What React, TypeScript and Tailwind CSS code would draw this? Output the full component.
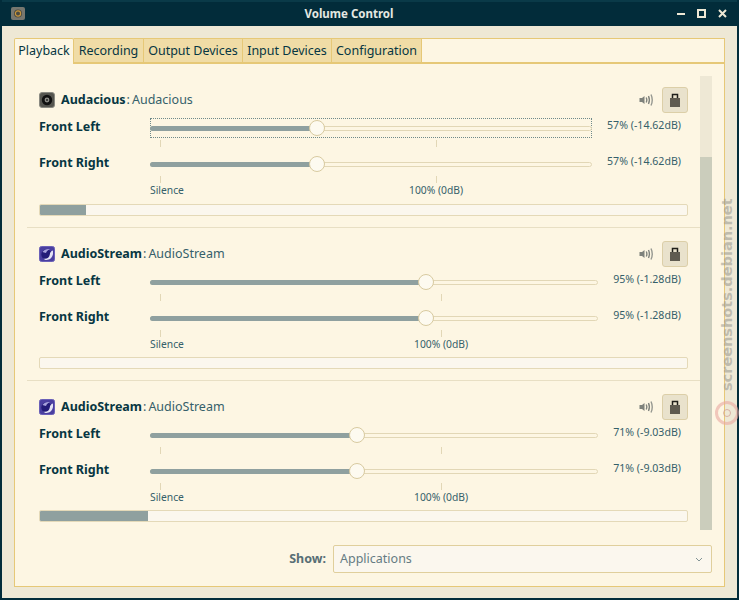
import React from 'react';

type Stream = {
    name: string;
    kind: 'audacious' | 'audiostream';
    value: string;
    thumb: number;
    zeroTick: number;
    meter: number;
};

const streams: Stream[] = [
    { name: 'Audacious', kind: 'audacious', value: '57% (-14.62dB)', thumb: 167, zeroTick: 286, meter: 46 },
    { name: 'AudioStream', kind: 'audiostream', value: '95% (-1.28dB)', thumb: 276, zeroTick: 291, meter: 0 },
    { name: 'AudioStream', kind: 'audiostream', value: '71% (-9.03dB)', thumb: 207, zeroTick: 291, meter: 108 },
];

const tabs = [
    { label: 'Playback', width: 'w-[60px]' },
    { label: 'Recording', width: 'w-[70px]' },
    { label: 'Output Devices', width: 'w-[99px]' },
    { label: 'Input Devices', width: 'w-[89px]' },
    { label: 'Configuration', width: 'w-[90px]' },
];

const AppIcon = () => (
    <svg width="14" height="13" viewBox="0 0 14 13">
        <rect x="0" y="0" width="14" height="13" rx="2" fill="#77776f" />
        <circle cx="7" cy="6.5" r="4" fill="#4a4a42" />
        <circle cx="7" cy="6.5" r="2.6" fill="none" stroke="#c8963c" strokeWidth="1.2" />
    </svg>
);

const AudaciousIcon = () => (
    <svg width="16" height="16" viewBox="0 0 16 16">
        <rect x="0.5" y="0.5" width="15" height="15" rx="2.5" fill="#55554f" stroke="#8a8a82" />
        <circle cx="8" cy="8" r="5.2" fill="#111" />
        <circle cx="8" cy="8" r="2.4" fill="#8c8c86" />
        <circle cx="8" cy="8" r="1" fill="#222" />
    </svg>
);

const AudioStreamIcon = () => (
    <svg width="16" height="16" viewBox="0 0 16 16">
        <rect x="0.5" y="0.5" width="15" height="15" rx="2" fill="#4a3fa0" stroke="#6a60b8" />
        <circle cx="7.5" cy="8.5" r="5.2" fill="#231c78" />
        <path d="M3.5 6 C5 3.5 8 2.5 11 3 C9 4 7.5 5 7 7 C5.5 6.5 4.5 6.2 3.5 6 Z" fill="#a7a2dc" />
        <path d="M4 12.5 C7 13.5 10.5 12 10.8 8.5 C11 6.5 12 5 14 4.5 L14 8 C13.5 11 11 14 7.5 14 C6 14 5 13.4 4 12.5 Z" fill="#e4e3f5" />
    </svg>
);

const SpeakerIcon = () => (
    <svg width="15" height="14" viewBox="0 0 15 14" fill="none">
        <path d="M0.5 5 H3 L5.5 3 V11 L3 9 H0.5 Z" fill="#7f827c" />
        <path d="M7.3 4.5 C8 6 8 8 7.3 9.5" stroke="#7f827c" strokeWidth="1.4" />
        <path d="M9.5 3 C10.6 5.5 10.6 8.5 9.5 11" stroke="#7f827c" strokeWidth="1.4" />
        <path d="M12 1.5 C13.6 5 13.6 9 12 12.5" stroke="#969891" strokeWidth="1.4" />
    </svg>
);

const LockIcon = () => (
    <svg width="12" height="16" viewBox="0 0 12 16" fill="none">
        <path d="M3.5 7 V2.5 H8.5 V7" stroke="#1f1f1a" strokeWidth="1.5" />
        <rect x="1" y="6" width="10" height="9" fill="#5f5b50" />
    </svg>
);

const Slider = ({ stream, focused }: { stream: Stream; focused: boolean }) => (
    <div className="flex-1">
        <div className={`relative h-5 ${focused ? 'outline outline-1 outline-dotted outline-[#6f8a8a] -outline-offset-1' : ''}`}>
            <div className="absolute left-0 right-0 top-[8px] h-[5px] rounded-full border border-[#e2d7b6] bg-[#fdf6e3]" />
            <div className="absolute left-0 top-[8px] h-[5px] rounded-l-full bg-[#8fa09f]" style={{ width: stream.thumb }} />
            <div
                className="absolute top-[2px] h-4 w-4 -ml-2 rounded-full border border-[#d8caa0] bg-[#fdfaf0]"
                style={{ left: stream.thumb }}
            />
        </div>
        <div className="relative mt-[2px] h-[7px]">
            <div className="absolute top-0 h-[7px] w-px bg-[#e2d7b6]" style={{ left: 10 }} />
            <div className="absolute top-0 h-[7px] w-px bg-[#e2d7b6]" style={{ left: stream.zeroTick }} />
        </div>
    </div>
);

const Channel = ({ label, stream, focused }: { label: string; stream: Stream; focused: boolean }) => (
    <div className="flex h-9 items-start">
        <div className="w-[111px] pt-px text-[12.5px] font-bold leading-4 text-[#073642]">{label}</div>
        <div className="flex flex-1 gap-[15px] pr-[7px]">
            <Slider stream={stream} focused={focused} />
            <div className="text-[10.6px] leading-[14px] text-[#35606a]">{stream.value}</div>
        </div>
    </div>
);

const StreamRow = ({ stream, index }: { stream: Stream; index: number }) => (
    <div className={`${index === 0 ? 'h-[152px] pt-[11px] border-b' : index === 1 ? 'h-[153px] pt-[13px] border-b' : 'pt-[13px]'} border-[#e8dfc4] pl-3 pr-3`}>
        <div className="flex h-[26px] items-center">
            {stream.kind === 'audacious' ? <AudaciousIcon /> : <AudioStreamIcon />}
            <div className="ml-[6px] flex-1 text-[12.5px] leading-4 text-[#073642]">
                <span className="font-bold">{stream.name}</span>
                <span className="ml-px text-[#35606a]">:</span>
                <span className="ml-[2px] text-[#35606a]">{stream.name}</span>
            </div>
            <SpeakerIcon />
            <div className="ml-[8px] flex h-[26px] w-[26px] items-center justify-center rounded-[3px] border border-[#dccfa8] bg-[#e9e2cc]">
                <LockIcon />
            </div>
        </div>
        <div className="mt-[5px]">
            <Channel label="Front Left" stream={stream} focused={index === 0} />
            <Channel label="Front Right" stream={stream} focused={false} />
        </div>
        <div className="relative -mt-[7px] h-[15px] text-[10.3px] leading-[15px] text-[#35606a]">
            <span className="absolute left-[111px]">Silence</span>
            <span className="absolute -translate-x-1/2" style={{ left: 111 + stream.zeroTick }}>100% (0dB)</span>
        </div>
        <div className={`${index === 0 ? 'mt-[6px]' : 'mt-[5px]'} h-[12px] overflow-hidden rounded-[2px] border border-[#e4d9b8] bg-[#fbf7ee]`}>
            <div className="h-full bg-[#8fa09f]" style={{ width: stream.meter }} />
        </div>
    </div>
);

export default function App() {
    return (
        <div className="flex h-[600px] w-[739px] flex-col bg-[#022c3a] px-[2px] pb-[2px] font-['Noto_Sans',sans-serif]">
            {/* titlebar */}
            <div className="relative flex h-[26px] items-center border-t-2 border-[#0a3a48] pb-[1px] pl-[9px] pr-[10px]">
                <AppIcon />
                <div className="absolute left-0 right-[41px] text-center text-[11.5px] font-bold text-[#e4e8e2]">Volume Control</div>
                <div className="relative ml-auto flex items-center gap-[12px]">
                    <div className="h-[2px] w-[8px] bg-[#eee8d5]" />
                    <div className="h-[9px] w-[9px] border-2 border-[#eee8d5]" />
                    <svg width="9" height="9" viewBox="0 0 9 9"><path d="M1 1 L8 8 M8 1 L1 8" stroke="#eee8d5" strokeWidth="2" /></svg>
                </div>
            </div>

            {/* window body */}
            <div className="flex flex-1 flex-col bg-[#eee8d5] px-3 pt-3 pb-[11px]">
                <div className="flex h-[25px]">
                    {tabs.map((t, i) => (
                        <div
                            key={t.label}
                            className={`${t.width} flex items-center justify-center text-[12.5px] text-[#073642] border-t border-r border-[#e6c877] ${i === 0 ? 'border-l bg-[#fdf6e3] h-[26px] z-10 rounded-t-[2px]' : 'bg-[#f0dca6] border-b pt-px'}`}
                        >
                            {t.label}
                        </div>
                    ))}
                    <div className="flex-1 border border-l-0 border-[#e6c877] bg-[#fdf6e3]" />
                </div>
                <div className="flex flex-1 flex-col border border-[#e6c877] bg-[#fdf6e3] pl-3 pr-3 pt-3">
                    <div className="flex h-[454px]">
                        <div className="flex-1">
                            {streams.map((s, i) => (
                                <StreamRow key={i} stream={s} index={i} />
                            ))}
                        </div>
                        <div className="flex w-3 flex-col bg-[#eee8d5]">
                            <div className="h-[81px]" />
                            <div className="flex-1 bg-[#cbcdbc]" />
                        </div>
                    </div>
                    <div className="mt-[15px] flex items-center justify-end gap-[7px]">
                        <div className="text-[12.5px] font-bold text-[#586e75]">Show:</div>
                        <div className="flex h-[28px] w-[379px] items-center justify-between rounded-[2px] border border-[#e0cf9c] bg-[#fbf7ee] pl-[6px] pr-[8px] text-[12.5px] text-[#657b83]">
                            <span>Applications</span>
                            <svg width="8" height="5" viewBox="0 0 8 5" fill="none"><path d="M1 1 L4 4 L7 1" stroke="#839496" strokeWidth="1" /></svg>
                        </div>
                    </div>
                </div>
            </div>

            {/* watermark */}
            <div className="absolute left-[719px] top-[189px] h-[202px] text-[14.5px] font-bold leading-4 text-[#8e8e86]/50 font-['DejaVu_Sans',sans-serif] [writing-mode:vertical-rl] rotate-180">
                screenshots.debian.net
            </div>
            <div className="absolute left-[715px] top-[401px] flex h-6 w-6 items-center justify-center rounded-full border-[3px] border-[#e9a8a0]/60">
                <div className="h-2 w-2 rounded-full border border-[#d09a90]/70" />
            </div>
        </div>
    );
}
